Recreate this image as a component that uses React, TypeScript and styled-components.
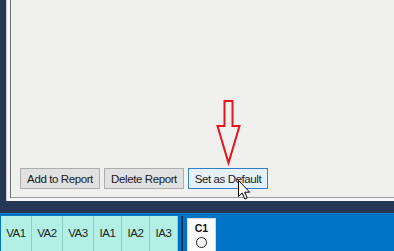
import React from "react";
import styled, { createGlobalStyle } from "styled-components";

const Global = createGlobalStyle`
  html, body { margin: 0; padding: 0; }
  body {
    width: 394px;
    height: 251px;
    overflow: hidden;
    background: #253754;
    font-family: "Liberation Sans", Arial, sans-serif;
  }
`;

const Screen = styled.div`
  width: 394px;
  height: 251px;
  display: flex;
  flex-direction: column;
  overflow: hidden;
`;

const Upper = styled.div`
  height: 201px;
  padding-left: 6px;
  display: flex;
  box-sizing: border-box;
`;

const Frame = styled.div`
  flex: 1;
  display: flex;
  border-left: 1px solid #c3cbe0;
  background: #f6f6f8;
  padding: 0 0 3px 3px;
`;

const Panel = styled.div`
  position: relative;
  flex: 1;
  display: flex;
  flex-direction: column;
  justify-content: flex-end;
  background: #f0f0ef;
  border-left: 1px solid #6e6e6e;
  border-bottom: 1px solid #9c9c9c;
  padding: 0 0 8px 9px;
`;

const ButtonRow = styled.div`
  display: flex;
  gap: 4px;
`;

const Button = styled.button<{ $active?: boolean }>`
  width: 80px;
  height: 21px;
  box-sizing: border-box;
  padding: 0;
  margin: 0;
  font-family: "Liberation Sans", Arial, sans-serif;
  font-size: 11.5px;
  letter-spacing: -0.4px;
  color: #1a1a1a;
  background: ${(p) => (p.$active ? "#e5f1fb" : "#e1e1e1")};
  border: 1px solid ${(p) => (p.$active ? "#2f7fc4" : "#adadad")};
  display: flex;
  align-items: center;
  justify-content: center;
`;

const ArrowMark = styled.svg`
  position: absolute;
  left: 205px;
  top: 98px;
`;

const Cursor = styled.svg`
  position: absolute;
  left: 227px;
  top: 180px;
`;

const NavyBand = styled.div`
  height: 12px;
  background: #253754;
`;

const BlueBand = styled.div`
  height: 38px;
  background: #0073c7;
  padding: 3px 0 0 1px;
  box-sizing: border-box;
  display: flex;
  align-items: stretch;
  overflow: hidden;
`;

const ToolGroup = styled.div`
  display: flex;
  height: 36px;
`;

const ToolButton = styled.div<{ $w: number }>`
  width: ${(p) => p.$w}px;
  height: 36px;
  box-sizing: border-box;
  background: #b2efe4;
  border-right: 1px solid #8ccfc6;
  display: flex;
  align-items: center;
  justify-content: center;
  font-size: 11.5px;
  letter-spacing: -0.5px;
  color: #1e1e1e;
  padding-bottom: 2px;
`;

const Separator = styled.div`
  width: 2px;
  margin-left: 3px;
  background: #1b355c;
  height: 40px;
`;

const ChannelBox = styled.div`
  width: 29px;
  margin-left: 4px;
  margin-top: 2px;
  height: 40px;
  box-sizing: border-box;
  background: #fbfbfb;
  border: 1px solid #d8d8d8;
  display: flex;
  flex-direction: column;
  align-items: center;
  padding-top: 4px;
`;

const ChannelLabel = styled.div`
  font-size: 10.5px;
  font-weight: bold;
  color: #111;
  line-height: 11px;
`;

const ChannelDot = styled.div`
  width: 9px;
  height: 9px;
  border: 1.3px solid #222;
  border-radius: 50%;
  margin-top: 3px;
`;

const tools = [
  { label: "VA1", w: 31 },
  { label: "VA2", w: 31 },
  { label: "VA3", w: 31 },
  { label: "IA1", w: 28 },
  { label: "IA2", w: 28 },
  { label: "IA3", w: 28 },
];

export default function App() {
  return (
    <>
      <Global />
      <Screen>
        <Upper>
          <Frame>
            <Panel>
              <ButtonRow>
                <Button>Add to Report</Button>
                <Button>Delete Report</Button>
                <Button $active>Set as Default</Button>
              </ButtonRow>
              <ArrowMark width="26" height="68" viewBox="0 0 26 68">
                <polygon
                  points="8.5,3 16.5,3 16.5,28 23.5,28 12.5,65 1.5,28 8.5,28"
                  fill="none"
                  stroke="#e5141f"
                  strokeWidth="2"
                  strokeLinejoin="miter"
                />
              </ArrowMark>
              <Cursor width="14" height="21" viewBox="0 0 14 21">
                <path
                  d="M0.5 0.5 L0.5 16.5 L4.2 13 L6.8 19 L9.2 18 L6.7 12.2 L11.7 12.2 Z"
                  fill="#ffffff"
                  stroke="#000000"
                  strokeWidth="1"
                  strokeLinejoin="miter"
                />
              </Cursor>
            </Panel>
          </Frame>
        </Upper>
        <NavyBand />
        <BlueBand>
          <ToolGroup>
            {tools.map((t) => (
              <ToolButton key={t.label} $w={t.w}>
                {t.label}
              </ToolButton>
            ))}
          </ToolGroup>
          <Separator />
          <ChannelBox>
            <ChannelLabel>C1</ChannelLabel>
            <ChannelDot />
          </ChannelBox>
        </BlueBand>
      </Screen>
    </>
  );
}
